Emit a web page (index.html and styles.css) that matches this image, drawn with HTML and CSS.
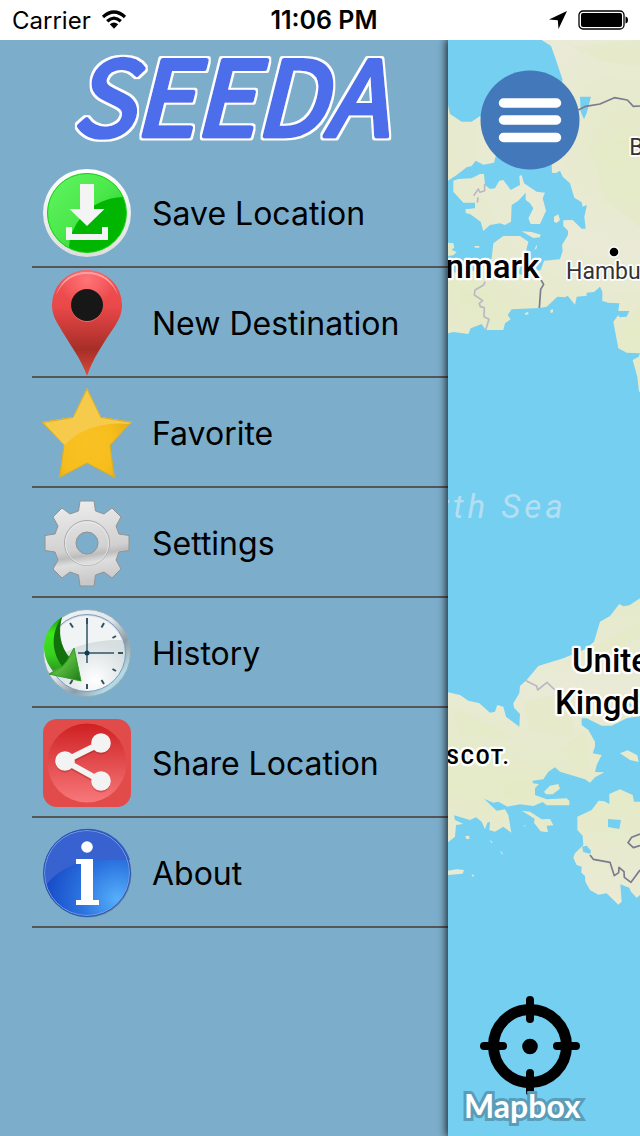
FILE: index.html
```html
<!DOCTYPE html>
<html lang="en">
<head>
<meta charset="utf-8">
<meta name="viewport" content="width=device-width, initial-scale=1">
<title>SEEDA</title>
<link rel="stylesheet" href="styles.css">
</head>
<body>
<header class="status">
  <div class="status-left">
    <span>Carrier</span>
    <svg class="wifi" viewBox="0 0 26 20" aria-hidden="true">
      <path d="M2 7Q13-3 24 7" fill="none" stroke="#000" stroke-width="3.2"/>
      <path d="M6.2 11.2Q13 5 19.800 11.200" fill="none" stroke="#000" stroke-width="3.2"/>
      <path d="M8.800 14.200Q13 10.800 17.200 14.200L13 18.800Z"/>
    </svg>
  </div>
  <time class="clock">11:06 PM</time>
  <div class="status-right">
    <svg class="arrow" viewBox="0 0 20 20" aria-hidden="true"><path d="M19 1 10.500 19 9.800 10.300 1 9.500Z"/></svg>
    <svg class="battery" viewBox="0 0 50 20" aria-hidden="true">
      <rect x="1" y="1" width="45" height="18" rx="4" fill="none" stroke="#000" stroke-width="1.300"/>
      <rect x="3" y="3" width="41" height="14" rx="2"/>
      <path d="M47.500 6.500Q50 7 50 10T47.500 13.500Z"/>
    </svg>
  </div>
</header>
<main class="screen">
  <nav class="drawer" aria-label="Main menu">
    <h1 class="brand">
      <svg class="brand-art" viewBox="0 0 360 118" role="img" aria-label="SEEDA">
        <defs>
          <filter id="outline" x="-5%" y="-5%" width="110%" height="110%">
            <feMorphology in="SourceAlpha" operator="dilate" radius="2" result="wide"/>
            <feFlood flood-color="#fff"/>
            <feComposite in2="wide" operator="in" result="edge"/>
            <feMerge><feMergeNode in="edge"/><feMergeNode in="SourceGraphic"/></feMerge>
          </filter>
        </defs>
        <text class="brand-text" x="8" y="96" filter="url(#outline)">SEEDA</text>
      </svg>
    </h1>
    <ul class="menu">
      <li><button class="item" type="button">
        <svg class="icon" viewBox="0 0 90 110" aria-hidden="true">
          <defs>
            <linearGradient id="ring" x2="0" y2="1"><stop stop-color="#fff"/><stop offset="1" stop-color="#dedede"/></linearGradient>
            <linearGradient id="gloss" x2="1" y2="1"><stop stop-color="#62f562"/><stop offset=".5" stop-color="#4be84b"/><stop offset="1" stop-color="#22c622"/></linearGradient>
          </defs>
          <circle cx="45" cy="55" r="44" fill="url(#ring)"/>
          <circle cx="45" cy="55" r="39.500" fill="#00b600"/>
          <path d="M27 90A39.500 39.500 0 1 1 81 39Q56 40 40 58 27 74 27 90Z" fill="url(#gloss)"/>
          <circle cx="45" cy="55" r="39.500" fill="none" stroke="#19d319"/>
          <path d="M38 26H52V51H62.500L45 68 27.500 51H38ZM24 69H30V76H60V69H66V82H24Z" fill="#f4f4f4"/>
        </svg><span>Save Location</span></button></li>
      <li><button class="item" type="button">
        <svg class="icon" viewBox="0 0 90 110" aria-hidden="true">
          <defs>
            <linearGradient id="pin" x2="0" y2="1"><stop stop-color="#f45558"/><stop offset=".35" stop-color="#e94748"/><stop offset=".75" stop-color="#a72e27"/><stop offset=".85" stop-color="#b93a2d"/><stop offset="1" stop-color="#e04b3a"/></linearGradient>
            <radialGradient id="pinlight" cx=".5" cy=".15" r=".4"><stop stop-color="#ff7377"/><stop offset="1" stop-color="#ff7377" stop-opacity="0"/></radialGradient>
          </defs>
          <path d="M45 108C40 92 26 74 17 58 12 50 10 44 10 37A35 35 0 0 1 80 37C80 44 78 50 73 58 62 74 50 92 45 108Z" fill="url(#pin)"/>
          <circle cx="45" cy="36" r="34" fill="url(#pinlight)"/>
          <path d="M14 27Q22 4 45 4T76 27Q66 6 45 6T14 27Z" fill="#ffb5b5" opacity=".75"/>
          <circle cx="45" cy="38" r="16" fill="#e36a6a"/>
          <circle cx="45" cy="37" r="16" fill="#171717"/>
        </svg><span>New Destination</span></button></li>
      <li><button class="item" type="button">
        <svg class="icon" viewBox="0 0 90 110" aria-hidden="true">
          <defs>
            <radialGradient id="gold" cx=".5" cy=".6" r=".5"><stop stop-color="#f9c222"/><stop offset=".6" stop-color="#f6bd1d"/><stop offset="1" stop-color="#e5ae18"/></radialGradient>
            <clipPath id="starclip"><path d="M45 10 59 39 90 44 68 67 73 100 45 85 17 100 22 67 0 44 31 39Z"/></clipPath>
          </defs>
          <g clip-path="url(#starclip)">
            <path d="M0 0H90V110H0Z" fill="url(#gold)"/>
            <path d="M0 0H90V46Q45 42 22 68L0 80Z" fill="#f6cb4c"/>
          </g>
          <path d="M45 11 59 39.500 89 44.500 68 67 72 99 45 85 18 99 22 67 1 44.500 31 39.500Z" fill="none" stroke="#d9ad26" stroke-width="1"/>
        </svg><span>Favorite</span></button></li>
      <li><button class="item" type="button">
        <svg class="icon" viewBox="0 0 90 110" aria-hidden="true">
          <defs>
            <linearGradient id="steel" x2=".15" y2="1"><stop stop-color="#efefef"/><stop offset=".62" stop-color="#d1d1d1"/><stop offset=".7" stop-color="#bdbdbd"/><stop offset=".78" stop-color="#dedede"/><stop offset="1" stop-color="#c9c9c9"/></linearGradient>
          </defs>
          <path d="M38 13H52L53.500 23 62 26 70 20 79 29 74 38 77 46 87 47.500V62.500L77 64 74 72 79 81 70 90 62 84 53.500 87 52 98H38L36.500 87 28 84 20 90 11 81 16 72 13 64 3 62.500V47.500L13 46 16 38 11 29 20 20 28 26 36.500 23ZM45 44A11 11 0 1 0 45 66 11 11 0 1 0 45 44Z" fill="url(#steel)" fill-rule="evenodd" stroke="#929292" stroke-width="1" stroke-linejoin="round"/>
          <circle cx="45" cy="55" r="22.500" fill="none" stroke="#aaa"/>
          <circle cx="45" cy="55.500" r="21.500" fill="none" stroke="#efefef" opacity=".7"/>
        </svg><span>Settings</span></button></li>
      <li><button class="item" type="button">
        <svg class="icon" viewBox="0 0 90 110" aria-hidden="true">
          <defs>
            <linearGradient id="chrome" x2="1" y2="1"><stop stop-color="#f5f9fa"/><stop offset=".45" stop-color="#dfe7e9"/><stop offset=".65" stop-color="#8b9da6"/><stop offset=".82" stop-color="#b2dce9"/><stop offset="1" stop-color="#8ba5ae"/></linearGradient>
            <radialGradient id="dial" cx=".6" cy=".85" r=".8"><stop stop-color="#fff"/><stop offset=".6" stop-color="#d8dfe0"/><stop offset="1" stop-color="#d3dbdd"/></radialGradient>
            <linearGradient id="leaf" x2="0" y2="1"><stop stop-color="#1f9a10"/><stop offset=".3" stop-color="#3ee81a"/><stop offset=".7" stop-color="#38cf22"/><stop offset="1" stop-color="#2a9a1c"/></linearGradient>
            <linearGradient id="tip" x2="1" y2="1"><stop stop-color="#167e0c"/><stop offset=".5" stop-color="#55b83b"/><stop offset="1" stop-color="#1c7917"/></linearGradient>
          </defs>
          <circle cx="45" cy="55" r="43.500" fill="url(#chrome)" stroke="#98abb4"/>
          <circle cx="45" cy="55" r="38.500" fill="url(#dial)" stroke="#8299bf"/>
          <path d="M7.500 55A37.500 37.500 0 0 1 80 42Q35 41 8 65Z" fill="#f0f4f5"/>
          <path d="M45 20V26M45 86V91M76 55H81M62 25 59.500 29.500M74 38 70.500 40M74 73 70.500 71M62 86 59.500 82M28 25 31 29.500M28 86 30.500 82" stroke="#34535f" stroke-width="2"/>
          <path d="M45 22V65M36 55H72" stroke="#315466" stroke-width="1.500"/><circle cx="45" cy="55" r="2.500" fill="#123b53"/>
          <path d="M20 19C-1 32-3 57 11 73L26 66C17 50 14 36 20 19Z" fill="url(#leaf)"/>
          <path d="M20 19C10 32 8 52 20 68L28 60C18 48 16 34 20 19Z" fill="#11720b"/>
          <path d="M7 76 20 69 25 63 32 50 39 83Z" fill="url(#tip)" stroke="#319b24"/>
        </svg><span>History</span></button></li>
      <li><button class="item" type="button">
        <svg class="icon" viewBox="0 0 90 110" aria-hidden="true">
          <defs><linearGradient id="share" x2="0" y2="1"><stop stop-color="#cf2023"/><stop offset="1" stop-color="#f7787a"/></linearGradient></defs>
          <rect x="1" y="11" width="88" height="88" rx="14" fill="#e14c4a"/>
          <circle cx="45" cy="55" r="39.500" fill="url(#share)"/>
          <g fill="#9c1c1c" stroke="#9c1c1c" opacity=".35"><path d="M59 37 23 55 59 75" fill="none" stroke-width="6"/><circle cx="59" cy="37" r="9"/><circle cx="23" cy="55" r="9"/><circle cx="59" cy="75" r="9"/></g>
          <path d="M59 35 23 53 59 73" fill="none" stroke="#f3f3f3" stroke-width="6"/>
          <g fill="#f3f3f3"><circle cx="59" cy="35" r="9.800"/><circle cx="23" cy="53" r="9.800"/><circle cx="59" cy="73" r="9.800"/></g>
        </svg><span>Share Location</span></button></li>
      <li><button class="item" type="button">
        <svg class="icon" viewBox="0 0 90 110" aria-hidden="true">
          <defs><radialGradient id="blue" cx=".85" cy=".8" r=".85"><stop stop-color="#55b0fa"/><stop offset=".5" stop-color="#2c73e0"/><stop offset="1" stop-color="#1749c6"/></radialGradient></defs>
          <circle cx="46" cy="56" r="43.500" fill="#4d6590" opacity=".5"/>
          <circle cx="45" cy="55" r="43.500" fill="url(#blue)"/>
          <path d="M4 67A43 43 0 1 1 88 42Q65 41 47 43 20 47 4 67Z" fill="#3862d0"/>
          <circle cx="45" cy="55" r="42.500" fill="none" stroke="#779ae5"/>
          <circle cx="45" cy="55" r="43.500" fill="none" stroke="#2856ad"/>
          <circle cx="45" cy="29" r="5.800" fill="#fff"/>
          <path d="M34 41H51V82H57V87H34V82H39V46H34Z" fill="#fff"/>
        </svg><span>About</span></button></li>
    </ul>
  </nav>
  <section class="map" aria-label="Map">
    <svg class="chart" viewBox="24 0 576 3288" preserveAspectRatio="xMinYMin slice" role="img" aria-label="Map of the North Sea">
      <defs>
        <radialGradient id="meadow" gradientUnits="userSpaceOnUse" cx="560" cy="300" r="330" spreadMethod="reflect"><stop stop-color="#e5eac8"/><stop offset="1" stop-color="#eaead6"/></radialGradient>
      </defs>
      <g fill="url(#meadow)">
        <path d="M600 0H305L333 18 348 60 368 120 330 240 336 398 348 399 360 392 368 410 390 430 403 473 425 487 428 500 441 495 433 530 437 566 425 566 398 540 370 541V558L384 572V585L366 615 368 632 360 658 312 662 302 690 245 705 235 700 255 645 265 605 240 588 190 588 160 610 155 655 120 690 24 700V880L40 876 85 882 92 865 125 852 137 870H190L195 850 212 838 203 825 215 808 298 804 320 800 352 770 375 772 383 767 405 794 410 770 440 767V758L462 756 480 740 487 755V783L505 788 538 790 535 813 568 813 560 830 538 832 535 825 520 845 535 925 560 938 600 940 596 950 578 960 592 1010 597 1055H600Z"/>
        <path d="M24 196 30 222 65 245H95L120 228 180 300 162 368 130 374 107 362 95 378 80 382 50 405 24 422Z"/>
        <path d="M40 422 55 417 95 415 120 402H132L135 435 150 447 165 445 178 422 190 420 212 450 240 435 238 408 245 405 252 430 290 455 315 458 308 475 318 512 300 552H272L265 535 280 505 270 490 257 480V458L235 482 215 495 213 545 195 555 180 550 150 555 130 573 122 545 90 522 78 520 76 508 105 505V488L70 488 40 455Z"/>
        <path d="M342 530 355 523 360 540 350 549 342 545ZM245 574 275 576 302 584 300 592 280 594ZM24 608 40 610 43 622 35 630 50 636 40 646 24 648ZM103 618H118V623H105ZM287 620 291 614 290 625 283 630ZM254 820 264 816 266 823 256 824ZM331 810 339 808V817L332 819ZM304 831 308 833Z"/>
        <path d="M600 1675 568 1696 550 1699 538 1692 510 1728 480 1745 462 1805 435 1828 370 1855 295 1878 260 1920 240 1938 238 1960 220 1990 222 2003 240 2022 238 2060 198 2030 190 2000 172 1995 165 2015 150 2018 118 1990 85 1982 60 1965 24 1957V2407L45 2390 48 2355 70 2352 45 2340 42 2326 90 2340 108 2332 125 2345 135 2368 142 2348 150 2345 148 2370 165 2375 190 2360 214 2378 205 2325 195 2308 170 2312 132 2276 160 2288 175 2285 203 2300 240 2293 280 2298 308 2286 320 2296H388V2282L380 2275 320 2278 285 2265V2245L297 2232 278 2230V2222L310 2218 325 2195 345 2182 360 2195 435 2218 450 2228 465 2212 493 2197 465 2196 470 2175 485 2145 458 2140 465 2120V2105L445 2070 425 2055V2035H440L485 2057H515L560 2035 600 2028Z"/>
        <path d="M540 2140 563 2131 592 2146 596 2166 570 2160ZM312 2255 330 2237 355 2232 360 2246 338 2263 318 2263ZM245 2312 270 2315 305 2338 330 2337 340 2356 320 2357 324 2377 302 2374 282 2348 284 2336ZM76 2388 87 2387 89 2396 79 2397ZM24 2492 50 2488 72 2490 68 2501 24 2505ZM148 2400 158 2406 155 2409ZM180 2432 188 2439 187 2445ZM251 2355 257 2357 255 2360ZM94 2503 103 2506 99 2511Z"/>
        <path d="M600 2285H582L578 2265 540 2248 508 2262V2292L493 2284 476 2282 455 2310 412 2330V2370L428 2387 430 2415 405 2440 400 2453 410 2475 425 2480 424 2498 435 2508 436 2525 450 2550 475 2564 500 2560 535 2594 545 2585 541 2533 568 2543 573 2555 590 2573 600 2565Z"/>
      </g>
      <g fill="#e3eac4" opacity=".5">
        <path d="M395 20 600 0V80L480 60ZM450 310 600 290V560L500 480ZM60 750 135 760 95 840 60 820ZM545 850 600 800V930L550 900ZM370 1870 600 1750V1790L430 1860ZM250 1990 390 1950 400 2090 270 2070ZM40 2010 160 2060 210 2100 60 2080ZM195 2230 280 2225 250 2280 190 2270ZM360 2130 440 2070 440 2190Z"/>
      </g>
      <g fill="#75cff1">
        <path d="M420 170H453L440 220 432 238 422 215ZM504 2337 543 2340 538 2367 504 2361ZM426 2420 440 2417 453 2432 451 2442 430 2436ZM568 1990 575 1992V2000L568 1998Z"/>
      </g>
      <g class="border">
        <path d="M415 210 437 199 480 192 523 173 562 180 580 199 600 198M303 720 311 733 302 748 298 804M450 2445 460 2458 510 2467 523 2507 536 2498 537 2482 552 2495 553 2512 573 2527 600 2490M600 2382 575 2392 564 2408 580 2423 600 2417"/>
        <path class="border-light" d="M135 725 131 735 105 750 103 765 128 782 118 790 121 800 133 803 132 830 147 838 137 870M101 467 115 447 120 457 134 452V432M114 472 112 488M258 1922 290 1938 293 1950 321 1927 345 1950"/>
      </g>
      <circle cx="522" cy="636" r="17" fill="#fff"/><circle cx="522" cy="636" r="13"/>
      <g class="place">
        <text class="country" x="298" y="713" text-anchor="end">Denmark</text>
        <text class="country" x="396" y="1896">United</text>
        <text class="country" x="345" y="2022">Kingdom</text>
        <text class="city" x="378" y="716">Hamburg</text>
        <text class="city" x="568" y="346">Berlin</text>
        <text class="region" x="212" y="2172" text-anchor="end">SCOT.</text>
      </g>
      <text class="sea" x="380" y="1434" text-anchor="end">North Sea</text>
    </svg>
    <div class="controls">
      <button class="round" type="button" aria-label="Toggle menu">
        <svg viewBox="0 0 100 100"><circle cx="50" cy="50" r="49.500" fill="#4378bb"/><path d="M23.500 33H76.500M23.500 50H76.500M23.500 67.500H76.500" stroke="#fff" stroke-width="9.500" stroke-linecap="round"/></svg>
      </button>
      <button class="round" type="button" aria-label="Locate me">
        <svg viewBox="0 0 100 100"><circle cx="50" cy="50" r="36.500" fill="none" stroke="#000" stroke-width="11"/><circle cx="50" cy="50.500" r="7.800"/><path d="M50 4V23M50 77V96M4 50H23M77 50H96" stroke="#000" stroke-width="8" stroke-linecap="round"/></svg>
      </button>
    </div>
    <a class="credit" href="#mapbox">Mapbox</a>
  </section>
</main>
</body>
</html>
```
FILE: styles.css
```css
* { box-sizing: border-box; }
body {
  margin: 0;
  min-height: 100vh;
  display: flex;
  flex-direction: column;
  background: #7caecb;
  color: #000;
  font-family: Inter, "Liberation Sans", sans-serif;
}
button { padding: 0; border: 0; background: none; color: inherit; font: inherit; }
svg { display: block; }

.status {
  display: grid;
  grid-template-columns: 1fr auto 1fr;
  align-items: center;
  height: 40px;
  padding: 0 12px;
  background: #fff;
  font-size: 24px;
}
.status-left, .status-right { display: flex; align-items: center; gap: 10px; }
.status-right { justify-content: flex-end; }
.clock { padding-left: 8px; font-size: 25px; font-weight: 600; }
.wifi { width: 26px; height: 20px; }
.arrow { width: 20px; height: 20px; }
.battery { width: 50px; height: 20px; }

.screen { flex: 1; display: flex; overflow: hidden; }
.drawer { width: 70%; }
.brand { margin: 0; padding-left: 64px; }
.brand-art { width: 360px; height: 118px; }
.brand-text {
  font-family: "Noto Sans CJK SC", sans-serif;
  font-size: 103px;
  font-weight: 400;
  font-style: italic;
  fill: #4e6eea;
  stroke: #4e6eea;
  stroke-width: 5px;
  stroke-linejoin: round;
}

.menu { margin: 0; padding: 0 0 0 32px; list-style: none; }
.item {
  width: 100%;
  height: 110px;
  display: flex;
  align-items: center;
  gap: 20px;
  padding: 2px 0 0 10px;
  border-bottom: 2px solid #555;
  font-size: 32px;
  text-align: left;
}
.icon { width: 90px; height: 110px; flex: none; }

.map {
  position: relative;
  flex: 1;
  min-width: 0;
  background: #75cff1;
  box-shadow: -1px 0 8px 1px rgba(0, 0, 0, .75);
}
.chart { position: absolute; inset: 0; width: 100%; height: 100%; }
.border { fill: none; stroke: #7a7b8e; stroke-width: 5px; stroke-linejoin: round; }
.border-light { stroke: #b9b9c6; }
.place {
  font-family: Roboto, sans-serif;
  paint-order: stroke;
  stroke: #fff;
  stroke-width: 14px;
  stroke-linejoin: round;
}
.country { font-size: 99px; font-weight: 500; }
.city { font-size: 69px; fill: #333; stroke-width: 10px; }
.region { font-size: 60px; font-weight: 700; letter-spacing: 6px; }
.sea {
  font-family: Roboto, sans-serif;
  font-size: 99px;
  font-style: italic;
  letter-spacing: 12px;
  fill: #b4dff2;
}
.controls {
  position: relative;
  height: 100%;
  padding: 30px 0 40px 32px;
  display: flex;
  flex-direction: column;
  justify-content: space-between;
}
.round, .round svg { width: 100px; height: 100px; }
.credit {
  position: absolute;
  left: 16px;
  bottom: 10px;
  color: #fff;
  font-family: Lato, sans-serif;
  font-size: 32px;
  font-weight: 700;
  line-height: 40px;
  text-decoration: none;
  paint-order: stroke;
  -webkit-text-stroke: 6px #5a9db8;
}
```
